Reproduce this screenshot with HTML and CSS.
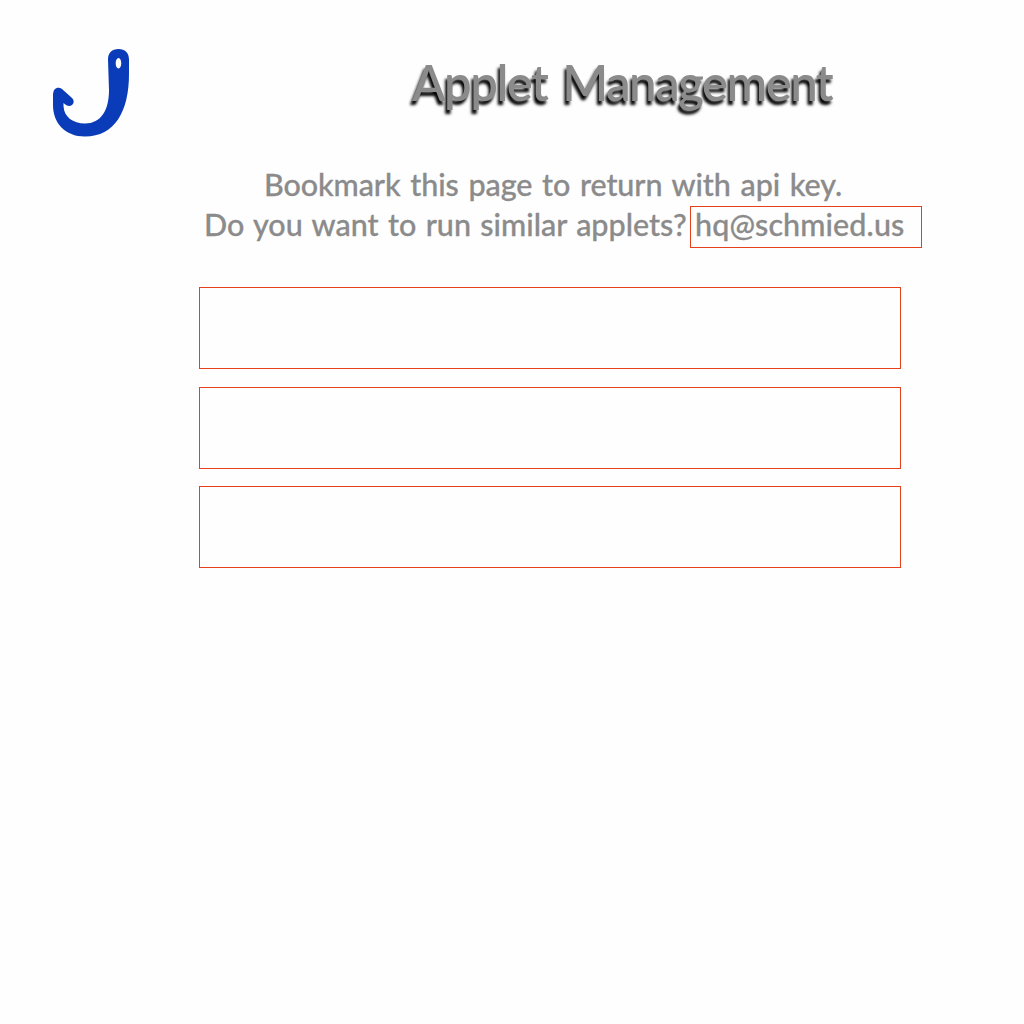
FILE: index.html
```html
<!DOCTYPE html>
<html lang="en">
<head>
<meta charset="utf-8">
<title>Applet Management</title>
<link rel="stylesheet" href="styles.css">
</head>
<body>
<header class="header">
  <svg class="logo" viewBox="0 0 78 88" aria-hidden="true">
    <path fill="#0a3bb8" fill-rule="evenodd" d="M56 10.500C56 4 60 0 66.500 0S77 4 77 10.500V25C77 62 63 87.500 33 87.500C13 87.500 1 74 1 56V46C1 39 6 37 10 40L20 49C25 54 18 61 11.500 54V57C12 68 21 74.500 33 74.500C49 74.500 57 61 57 41ZM66.500 9C62.800 9 62.800 19.500 66.500 19.500S70.200 9 66.500 9Z"/>
  </svg>
  <h1 class="title">Applet Management</h1>
</header>
<main>
  <p class="line bookmark">Bookmark this page to return with api key.</p>
  <div class="contact">
    <p class="line question">Do you want to run similar applets?</p>
    <a class="line email">hq@schmied.us</a>
  </div>
  <div class="fields">
    <div class="field"></div>
    <div class="field"></div>
    <div class="field last"></div>
  </div>
</main>
</body>
</html>
```
FILE: styles.css
```css
* { box-sizing: border-box; }
body { margin: 0; background: #fefefe; color: #8b8b8b; font-family: Lato, sans-serif; }
.header { display: flex; height: 164px; padding: 49px 0 0 52px; }
.logo { width: 78px; height: 88px; flex: none; }
.title { margin: 4px 0 0 282px; font-size: 49px; line-height: 58px; font-weight: 600; letter-spacing: -1.5px; word-spacing: 4px; white-space: nowrap; text-shadow: -2px 4px 3px #000; }
.line { margin: 0; font-size: 30.5px; line-height: 40px; font-weight: 500; white-space: nowrap; -webkit-text-stroke: 0.3px #8b8b8b; }
.bookmark { padding-left: 264px; letter-spacing: -0.1px; word-spacing: 2.2px; }
.contact { display: flex; padding-left: 204px; height: 44px; }
.question { width: 486px; letter-spacing: 0; word-spacing: 1.7px; }
.email { width: 232px; height: 42px; margin-top: 2px; border: 1px solid #e5401c; padding-left: 4px; line-height: 34px; letter-spacing: 0.1px; }
.fields { display: flex; flex-direction: column; gap: 18px; padding: 39px 0 0 199px; }
.field { width: 702px; height: 82px; border: 1px solid #e5401c; }
.last { margin-top: -1px; }
```
